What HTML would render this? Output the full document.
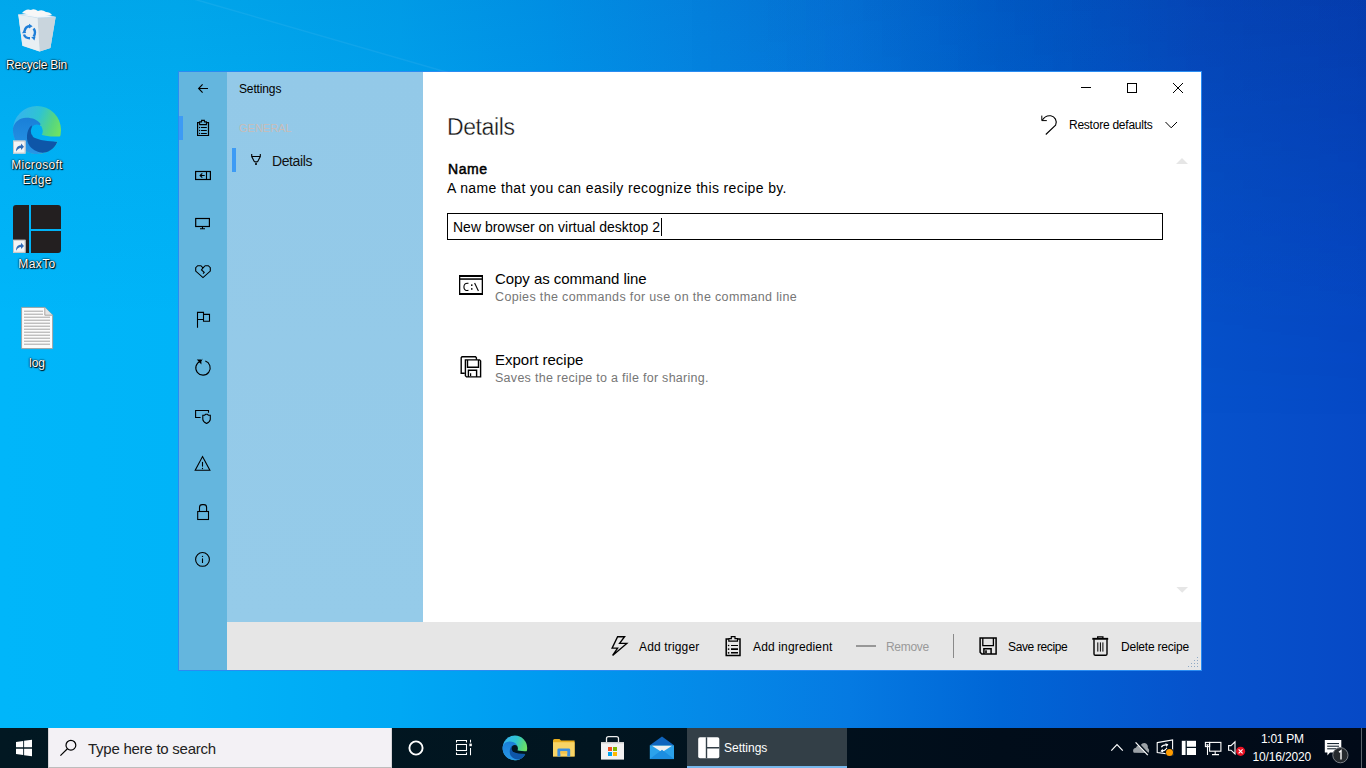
<!DOCTYPE html>
<html><head><meta charset="utf-8">
<style>
*{margin:0;padding:0;box-sizing:border-box}
html,body{width:1366px;height:768px;overflow:hidden}
body{position:relative;font-family:"Liberation Sans",sans-serif;background:#0a70dc}
.abs{position:absolute}
#wp{left:0;top:0;width:1366px;height:728px;
background:
 linear-gradient(90deg,#00b6fa 0px,#00b4f8 180px,#00a8f4 400px,#009af0 550px,#048ae8 700px,#057ae2 850px,#0066d6 1000px,#0652cc 1200px,#0649c6 1366px);
}
#wp2{left:0;top:0;width:1366px;height:728px;
background:linear-gradient(180deg,rgba(0,20,90,.09) 0px,rgba(0,20,90,.04) 150px,rgba(0,20,90,0) 320px);}
#wp3{left:683px;top:0;width:683px;height:728px;
background:linear-gradient(90deg,rgba(0,10,80,0) 0px,rgba(0,10,80,.14) 683px);
-webkit-mask-image:linear-gradient(180deg,#000 0px,rgba(0,0,0,0) 420px);}
#win{left:178px;top:71px;width:1024px;height:600px;border:1px solid #2a8cf2}
#icol{left:179px;top:72px;width:48px;height:598px;background:#64b6de}
#nav{left:227px;top:72px;width:196px;height:550px;background:linear-gradient(180deg,#93c9e8 0%,#95cbe9 100%)}
#content{left:423px;top:72px;width:778px;height:550px;background:#fff}
#cmdbar{left:227px;top:622px;width:974px;height:48px;background:#e6e6e6}
#taskbar{left:0;top:728px;width:1366px;height:40px;background:linear-gradient(90deg,#021822 0px,#011520 600px,#010d1a 1000px,#010a18 1366px)}
#search{left:48px;top:728px;width:344px;height:40px;background:#f3f1f5;border-left:1px solid #d6d3d8;border-right:1px solid #d6d3d8;border-bottom:1px solid #bdbdbd}
#tbset{left:687px;top:728px;width:160px;height:40px;background:#333f47;border-bottom:2px solid #77b8ec}
.t{position:absolute;white-space:nowrap;line-height:1}
.dl{position:absolute;width:76px;text-align:center;color:#fff;font-size:12px;line-height:15px;text-shadow:0 0 2px rgba(0,0,0,.95),1px 1px 1px #000,0 0 1px #000}
</style></head>
<body>
<div id="wp" class="abs"></div>
<div id="wp2" class="abs"></div>
<div id="wp3" class="abs"></div>

<!-- desktop labels -->
<div class="dl" style="left:-1.5px;top:58px;letter-spacing:-0.22px">Recycle Bin</div>
<div class="dl" style="left:-1px;top:158px;letter-spacing:0.3px;line-height:14.5px">Microsoft<br>Edge</div>
<div class="dl" style="left:-1px;top:257px;letter-spacing:0.4px">MaxTo</div>
<div class="dl" style="left:-1px;top:356px">log</div>

<div id="win" class="abs"></div>
<div id="icol" class="abs"></div>
<div id="nav" class="abs"></div>
<div id="content" class="abs"></div>
<div id="cmdbar" class="abs"></div>
<div id="taskbar" class="abs"></div>
<div id="search" class="abs"></div>
<div id="tbset" class="abs"></div>

<!-- nav -->
<div class="t" style="left:239px;top:83px;font-size:12px;letter-spacing:-0.14px;color:#000">Settings</div>
<div class="t" style="left:239px;top:123px;font-size:11px;color:#c8bdb8">GENERAL</div>
<div class="abs" style="left:179px;top:116px;width:4px;height:24px;background:#3d9bf5"></div>
<div class="abs" style="left:232px;top:148px;width:4px;height:24px;background:#3d9bf5"></div>
<div class="t" style="left:272px;top:154px;font-size:14px;letter-spacing:-0.4px;color:#111">Details</div>

<!-- content -->
<div class="t" style="left:447px;top:116px;font-size:23px;letter-spacing:-0.4px;color:#111;-webkit-text-stroke:0.35px #fff">Details</div>
<div class="t" style="left:448px;top:162px;font-size:14px;letter-spacing:0.55px;color:#000;-webkit-text-stroke:0.5px #000">Name</div>
<div class="t" style="left:447px;top:181px;font-size:14px;letter-spacing:0.36px;color:#000">A name that you can easily recognize this recipe by.</div>
<div class="abs" style="left:447px;top:213px;width:716px;height:27px;border:1px solid #000"></div>
<div class="t" style="left:453px;top:220px;font-size:14px;color:#000">New browser on virtual desktop 2</div>
<div class="abs" style="left:661px;top:218px;width:1px;height:18px;background:#000"></div>

<div class="t" style="left:495px;top:271px;font-size:15px;letter-spacing:-0.05px;color:#000">Copy as command line</div>
<div class="t" style="left:495px;top:291px;font-size:12.5px;letter-spacing:0.35px;color:#767676">Copies the commands for use on the command line</div>
<div class="t" style="left:495px;top:352px;font-size:15px;color:#000">Export recipe</div>
<div class="t" style="left:495px;top:372px;font-size:12.5px;letter-spacing:0.28px;color:#767676">Saves the recipe to a file for sharing.</div>

<div class="t" style="left:1069px;top:119px;font-size:12px;letter-spacing:-0.24px;color:#000">Restore defaults</div>

<!-- command bar -->
<div class="t" style="left:639px;top:641px;font-size:12px;letter-spacing:0.15px;color:#000">Add trigger</div>
<div class="t" style="left:753px;top:641px;font-size:12px;letter-spacing:0.15px;color:#000">Add ingredient</div>
<div class="t" style="left:886px;top:641px;font-size:12px;letter-spacing:-0.3px;color:#999">Remove</div>
<div class="t" style="left:1008px;top:641px;font-size:12px;letter-spacing:-0.36px;color:#000">Save recipe</div>
<div class="t" style="left:1121px;top:641px;font-size:12px;letter-spacing:-0.22px;color:#000">Delete recipe</div>

<!-- taskbar -->
<div class="t" style="left:88px;top:741px;font-size:15px;letter-spacing:-0.25px;color:#222">Type here to search</div>
<div class="t" style="left:724px;top:741.5px;font-size:12px;color:#fff">Settings</div>
<div class="t" style="left:1261px;top:733px;font-size:12px;letter-spacing:-0.3px;color:#fff">1:01 PM</div>
<div class="t" style="left:1252.5px;top:751px;font-size:12px;letter-spacing:-0.15px;color:#fff">10/16/2020</div>

<svg class="abs" style="left:0;top:0" width="1366" height="768" viewBox="0 0 1366 768">
<defs>
 <linearGradient id="edgeA" x1="0" y1="0.25" x2="1" y2="0.65">
  <stop offset="0" stop-color="#36b2f0"/><stop offset="0.45" stop-color="#2fc4d2"/><stop offset="0.75" stop-color="#56d680"/><stop offset="1" stop-color="#78e658"/>
 </linearGradient>
 <linearGradient id="edgeB" x1="0" y1="0" x2="0" y2="1">
  <stop offset="0" stop-color="#1a7fd8"/><stop offset="1" stop-color="#2896e6"/>
 </linearGradient>
</defs>
<!-- ===== window icon column ===== -->
<g fill="none" stroke="#000" stroke-width="1.1" stroke-linejoin="miter">
 <path d="M198.6 88.5H208M202.6 84.3L198.6 88.5L202.6 92.7"/>
 <path d="M199.6 122.6H197.6V135.5H208.5V122.6H206.4" stroke-width="1.2"/>
 <path d="M199.6 121.9V124.6H206.4V121.9H204.4V120.4H201.6V121.9Z"/>
 <path d="M201 127.5H206.8M201 130.5H206.8M201 133.5H206.8"/>
 <rect x="195.6" y="171.5" width="14.8" height="8" stroke-width="1.2"/>
 <path d="M206.5 171.5V179.5"/>
 <path d="M200.1 175.5H204.7M202.3 173.3L200.1 175.5L202.3 177.7"/>
 <rect x="195.7" y="218.5" width="13.7" height="8" stroke-width="1.2"/>
 <path d="M202.5 226.5V228.6M200 228.7H205"/>
 <path d="M203 267.9L200.9 265.7H197.7L195.7 267.7V271.1L203 277.6L210.3 271.1V267.7L208.3 265.7H205.2L203 267.9"/>
 <path d="M203 267.9L201.5 269.9L204.2 272.3L203.1 273.6"/>
 <path d="M197.5 327.8V312.4H203.5V319.5H197.5M203.5 314.4H209.5V321.3H203.5V319.5"/>
 <path d="M200.4 361.2A7.2 7.2 0 1 0 205.3 361.1"/>
 <path d="M200.6 361.2L202.3 359.5" stroke-width="1"/>
 <path d="M200.6 417.5H195.6V410.5H208.5V412.7"/>
 <path d="M202.8 415.2H204.6L205.6 414.3H207.4L208.4 415.2H210.3V419.2Q210.3 421.6 206.6 423.5Q202.8 421.6 202.8 419.2Z"/>
 <path d="M202.5 456.6L209.9 470.3H195.2Z"/>
 <path d="M202.5 461.9V466.6"/>
 <rect x="197.7" y="511.5" width="10.8" height="8"/>
 <path d="M199.5 511.5V507.4Q199.5 504.6 202.2 504.6H203.9Q206.6 504.6 206.6 507.4V511.5"/>
 <circle cx="202.5" cy="559.4" r="6.9"/>
 <path d="M202.5 558.4V563"/>
</g>
<g fill="#000">
 <circle cx="199.6" cy="127.5" r="0.65"/><circle cx="199.6" cy="130.5" r="0.65"/><circle cx="199.6" cy="133.5" r="0.65"/>
 <path d="M196.8 359.6H201.4V364.4Z"/>
 <circle cx="202.5" cy="468.5" r="0.65"/>
 <circle cx="202.5" cy="556.4" r="0.7"/>
</g>
<!-- nav funnel -->
<g fill="none" stroke="#000" stroke-width="1.1">
 <path d="M251.7 154V156.6L254.4 161.7H257.6L260.3 156.6V154M251.7 156.5H260.3"/>
</g>
<rect x="255.2" y="162.6" width="1.6" height="2.4" fill="#000"/>
<!-- title bar -->
<g fill="none" stroke="#000" stroke-width="1">
 <path d="M1081 87.5H1091"/>
 <rect x="1127.5" y="83.5" width="9" height="9"/>
 <path d="M1173 83L1183 93M1183 83L1173 93"/>
 <path d="M1041.8 115.6V120.6H1046.8"/>
 <path d="M1042.2 120.2C1044.2 117 1047.5 115.3 1050.8 115.8C1054.8 116.5 1057.6 120.8 1055.6 125.2L1045.8 134.5" stroke-width="1.1"/>
 <path d="M1165.5 122L1171.2 127.8L1177 122"/>
</g>
<path d="M1182 158L1188 164H1176Z M1176.5 587H1188L1182.2 592.8Z" fill="#e6e6e6"/>
<!-- copy icon -->
<g fill="#000">
 <rect x="459" y="275" width="24" height="2"/>
 <rect x="459" y="278.3" width="24" height="1.5"/>
 <rect x="459" y="275" width="1.3" height="20"/>
 <rect x="481.7" y="275" width="1.3" height="20"/>
 <rect x="459" y="293" width="24" height="2"/>
 <rect x="471" y="284.4" width="1.5" height="1.5"/>
 <rect x="471" y="288.2" width="1.5" height="1.5"/>
</g>
<g fill="none" stroke="#000" stroke-width="1.1">
 <path d="M468.4 283.4C465.7 282.7 463.9 284.4 463.9 286.9C463.9 289.3 465.6 291.1 468.4 290.4"/>
 <path d="M474.6 283.1L478.4 290.9"/>
</g>
<!-- export icon -->
<g fill="none" stroke="#000" stroke-width="1.4">
 <path d="M464.8 373.3H461.2V357.7L462 356.8H475.5L476.4 357.7V359.8"/>
 <path d="M465.4 359.9H479.6L480.6 361V376.9H466.5L465.4 375.8Z" fill="#fff"/>
 <path d="M467.5 360V367.3H478.5V360"/>
 <path d="M468.4 376.9V370.3H476.6V376.9"/>
 <path d="M470.6 373.2V376" stroke-width="1.2"/>
</g>
<!-- command bar -->
<g fill="none" stroke="#000" stroke-width="1.35" stroke-linejoin="miter">
 <path d="M617.6 636.7H624.6L619.6 643.4H626.8L612.6 655.4L617.6 648.1H612.1Z"/>
 <path d="M728.6 639.1H726.2V655.4H740V639.1H737.7" stroke-width="1.5"/>
 <path d="M728.8 638.6V641.2H737.5V638.6H735V636.7H731.3V638.6Z" stroke-width="1.2"/>
 <path d="M731 645.5H738" stroke-width="1"/>
 <path d="M731 649.1H738M731 652.8H738" stroke-width="1.6"/>
 <path d="M980.1 637.9H996.1V654H981.8L980.1 652.3Z" stroke-width="1.5"/>
 <path d="M982.8 638V645.6H993.4V638" stroke-width="1.3"/>
 <path d="M983.9 654V648.7H991.1V654" stroke-width="1.5"/>
 <path d="M1092.3 638.8H1108.2" stroke-width="1.9"/>
 <path d="M1097.7 638.2V636.8H1102.9V638.2" stroke-width="1.3"/>
 <path d="M1094 639.2V654Q1094 655.3 1095.4 655.3H1105.6Q1107 655.3 1107 654V639.2" stroke-width="1.4"/>
 <path d="M1097.8 642.4V651.6M1100.4 642.4V651.6M1102.9 642.4V651.6" stroke-width="1"/>
</g>
<g fill="#000">
 <circle cx="728.6" cy="645.5" r="0.8"/><circle cx="728.6" cy="649.1" r="0.9"/><circle cx="728.6" cy="652.8" r="0.9"/>
 <rect x="985.2" y="650.3" width="1.6" height="2.8"/>
</g>
<rect x="856" y="645" width="20" height="2" fill="#979797"/>
<rect x="953" y="634" width="1" height="24" fill="#8a8a8a"/>
<g fill="#8fa9c4">
 <rect x="1197" y="657" width="1" height="1"/>
 <rect x="1194" y="660" width="1" height="1"/><rect x="1197" y="660" width="1" height="1"/>
 <rect x="1191" y="663" width="1" height="1"/><rect x="1194" y="663" width="1" height="1"/><rect x="1197" y="663" width="1" height="1"/>
 <rect x="1188" y="666" width="1" height="1"/><rect x="1191" y="666" width="1" height="1"/><rect x="1194" y="666" width="1" height="1"/><rect x="1197" y="666" width="1" height="1"/>
</g>

<!-- ===== taskbar ===== -->
<g fill="#fff">
 <path d="M16 741.9L23.2 740.9V747.3H16Z"/>
 <path d="M24.1 740.8L32 739.7V747.3H24.1Z"/>
 <path d="M16 748.7H23.2V755L16 754Z"/>
 <path d="M24.1 748.7H32V756.3L24.1 755.2Z"/>
</g>
<g fill="none" stroke="#000" stroke-width="1.2">
 <circle cx="70.9" cy="745.2" r="4.9"/>
 <path d="M67.4 748.7L60.4 755.6"/>
</g>
<circle cx="416" cy="748" r="6.6" fill="none" stroke="#fff" stroke-width="1.9"/>
<g fill="none" stroke="#fff" stroke-width="1.05">
 <path d="M456.5 742.6V740.5H466.5V742.6"/>
 <rect x="456.5" y="744.5" width="10" height="6"/>
 <path d="M456.5 752.4V754.5H466.5V752.4"/>
 <path d="M470.5 739.8V742.4M470.5 748V755.2"/>
</g>
<rect x="469.4" y="743.6" width="2.4" height="2.6" fill="#fff"/>
<!-- edge taskbar -->
<g transform="translate(502.6 735.6) scale(0.5125)">
 <use href="#edgeIcon"/>
</g>
<!-- explorer -->
<path d="M553 740.5Q553 739 554.5 739H559.5L561 740.5H574.6V756.4H553Z" fill="#e9ae1f"/>
<path d="M553 742.2H574.6V756.4H553Z" fill="#f8d466"/>
<path d="M557.4 756.4V749.8Q557.4 748.4 558.8 748.4H568.8Q570.2 748.4 570.2 749.8V756.4H567.2V751.2H560.4V756.4Z" fill="#3a8de0"/>
<rect x="560.4" y="751.2" width="6.8" height="2.5" fill="#f3c24a"/>
<!-- store -->
<path d="M606.5 742.2V738.6Q606.5 736.6 608.5 736.6H616.5Q618.5 736.6 618.5 738.6V742.2" fill="none" stroke="#ececec" stroke-width="1.3"/>
<path d="M601 742H624V759.6H601Z" fill="#f2f2f2"/>
<rect x="601" y="742" width="23" height="1.4" fill="#cfcfcf"/>
<rect x="608" y="747" width="4" height="4" fill="#f25022"/>
<rect x="613" y="747" width="4" height="4" fill="#7fba00"/>
<rect x="608" y="752" width="4" height="4" fill="#00a4ef"/>
<rect x="613" y="752" width="4" height="4" fill="#ffb900"/>
<!-- mail -->
<path d="M649.8 745.2L662 736.4L674 745.2Z" fill="#0f64bd"/>
<path d="M649.8 745.2H674V759.1H649.8Z" fill="#2ba2eb"/>
<path d="M652 745.8H672L662 752.3Z" fill="#f0f0f0"/>
<path d="M649.8 759.1L662 749.8L674 759.1Z" fill="#1c8ee0"/>
<!-- settings app taskbar icon -->
<rect x="698.2" y="737.2" width="21.1" height="21.1" rx="1.8" fill="#fff"/>
<path d="M706.5 737.2V758.3M706.5 747.8H719.3" stroke="#333f47" stroke-width="1.4"/>
<!-- tray -->
<path d="M1111.3 750.6L1117 744.7L1122.8 750.6" fill="none" stroke="#fff" stroke-width="1.2"/>
<path d="M1133.8 752.8C1132.5 751.2 1133 748.2 1136 747.8C1136.8 745.4 1139 744.6 1140.8 745.2C1141.8 743.2 1144.4 742.4 1146.1 743.6C1147.7 744.6 1148.1 746.6 1147.8 748C1149.4 748.8 1149.7 751.6 1148.3 753Z" fill="#9ba1a6"/>
<path d="M1136.8 742.2L1148.8 755" stroke="#010d1a" stroke-width="2.4"/><path d="M1135.6 742.4L1147.8 755.2" stroke="#fff" stroke-width="1.2"/>
<path d="M1157.2 742.6L1172.6 740V754.6L1157.2 752.6Z" fill="none" stroke="#fff" stroke-width="1.1"/>
<path d="M1161.4 747.2Q1162.4 744.6 1166.6 744.8M1166.8 747.8Q1165.8 750.8 1161.8 750.8" fill="none" stroke="#fff" stroke-width="1.2"/><path d="M1165.2 743.2L1168.4 744.2L1166.6 747Z M1163.2 752.6L1160.4 751.2L1162.6 748.8Z" fill="#fff"/>
<circle cx="1169.5" cy="752.4" r="4.1" fill="#010d1a"/><circle cx="1169.5" cy="752.4" r="3.5" fill="#ff9c00"/>
<rect x="1181.8" y="740.8" width="14.2" height="14.2" fill="#fff"/>
<path d="M1186.2 740.8V755M1186.2 747.4H1196" stroke="#03131f" stroke-width="1.3"/>
<g fill="none" stroke="#fff" stroke-width="1.1">
 <rect x="1209.6" y="742.4" width="11.3" height="8.8"/>
 <rect x="1205.4" y="742.4" width="4.2" height="4.2"/>
 <path d="M1207.5 746.6V755M1215.2 751.2V754.6M1212 754.6H1219M1206.5 744.5L1207.5 745.5L1208.5 744.5"/>
 <path d="M1228.6 745.6H1231L1235 741.8V754L1231 750.2H1228.6Z"/>
</g>
<circle cx="1240.6" cy="751.3" r="4.6" fill="#e81123"/>
<path d="M1238.6 749.3L1242.6 753.3M1242.6 749.3L1238.6 753.3" stroke="#fff" stroke-width="1.1"/>
<path d="M1324.8 740H1341.3V752.6H1330L1327.4 755.4V752.6H1324.8Z" fill="#fff"/>
<path d="M1327.2 743.6H1339M1327.2 746.2H1339M1327.2 748.8H1336" stroke="#03131f" stroke-width="1"/>
<circle cx="1340.4" cy="755.2" r="7.6" fill="#262a2e" stroke="#7b8086" stroke-width="1"/>
<path d="M1339 752.2L1341 750.6V759.6" fill="none" stroke="#fff" stroke-width="1.4"/>
<rect x="1361" y="728" width="1" height="40" fill="#5a636b"/>

<line x1="190" y1="-2" x2="460" y2="76" stroke="#fff" stroke-opacity="0.06" stroke-width="1.5"/>
<!-- ===== desktop icons ===== -->
<defs>
 <mask id="edgeMask" maskUnits="userSpaceOnUse" x="-2" y="-2" width="52" height="52">
  <rect x="-2" y="-2" width="52" height="52" fill="#fff"/>
  <ellipse cx="23.8" cy="25" rx="6" ry="6.6" fill="#000"/>
  <path d="M24 27.2C30 30 40 31.2 48.5 30.3V37L44.4 35.7C36 35.6 26 34.5 19.5 30.8Z" fill="#000"/>
  <path d="M44.4 35.7L48.5 36V48.5H30.5C38 46.5 42.5 41.5 44.4 35.7Z" fill="#000"/>
 </mask>
 <g id="edgeIcon">
  <g mask="url(#edgeMask)">
   <circle cx="24" cy="24" r="24" fill="url(#edgeA)"/>
   <path d="M0 22C2 15 7 12 13 11.7C19 11.5 24.5 13.5 27.6 17.9L24 25C28 30.5 36 34.8 44.4 35.7C40 44 32 48 24 48C10.7 48 0 37.3 0 24Z" fill="url(#edgeB)"/>
   <path d="M18.3 19.6C13.2 24.5 12.4 34.5 16.8 40.3C20.8 45 26.8 47 31 46.6C37 45.8 42.2 41.2 44.4 35.7C36 34.8 28 30.5 24 25Z" fill="#0e56a8"/>
  </g>
 </g>
 <g id="shortcut">
  <rect x="0" y="0" width="12.5" height="13" fill="#f4f4f4"/>
  <rect x="0.5" y="0.5" width="11.5" height="12" fill="none" stroke="#c8c8c8" stroke-width="1"/>
  <path d="M3 11C3 7 5 5 8 5V3L11 6.2L8 9.3V7.3C6 7.3 4.5 8.5 3 11Z" fill="#2f6cb8"/>
 </g>
</defs>
<!-- recycle bin -->
<path d="M18.3 14.8L37.5 12.5L55.6 17.2L50.4 48L39.6 51.6L22.4 45.8Z" fill="#dfe8ee"/>
<path d="M37.5 18L55.6 17.2L50.4 48L39.6 51.6Z" fill="#c9d5dd"/>
<path d="M18.3 14.8L37.5 18L55.6 17.2L37.5 12.5Z" fill="#f0f6fa" stroke="#b8d4e8" stroke-width="0.8"/>
<path d="M22 13Q26 8 31 10Q34 8 38 11Q42 9 46 12Q50 12 52 15L37.5 16.5Z" fill="#f7f7f7"/>
<path d="M18.3 14.8L22.4 45.8L39.6 51.6L37.5 18Z" fill="#e9eff3" opacity="0.9"/>
<g fill="none" stroke="#1f7fd8" stroke-width="2.4" stroke-linecap="butt">
 <path d="M24.6 31.5Q25 26.5 29.8 26"/>
 <path d="M33.6 28.5Q36.5 32.5 33.6 36.5"/>
 <path d="M30 38.2Q25.2 38.2 24 34.5"/>
</g>
<g fill="#1f7fd8">
 <path d="M29 23.8L32.6 26.2L29 28.6Z"/>
 <path d="M31.2 37L35.6 36.4L34.4 40.4Z"/>
 <path d="M22 33.2L26.2 33L24.4 29.4Z"/>
</g>
<!-- edge desktop -->
<g transform="translate(13 106)"><use href="#edgeIcon"/></g>
<g transform="translate(13 140.6)"><use href="#shortcut"/></g>
<!-- maxto -->
<path d="M16 205H29V253H16Q13 253 13 250V208Q13 205 16 205Z" fill="#231f20"/>
<path d="M31 205H58Q61 205 61 208V229H31Z" fill="#231f20"/>
<path d="M31 231H61V250Q61 253 58 253H31Z" fill="#231f20"/>
<g transform="translate(13 239.8)"><use href="#shortcut"/></g>
<!-- log -->
<path d="M21.6 307.4H44.8L52.6 315.2V348.6H21.6Z" fill="#fbfbfb" stroke="#a39e9a" stroke-width="0.9"/>
<path d="M44.8 307.4V315.2H52.6" fill="#e4e4e4" stroke="#a39e9a" stroke-width="0.9"/>
<g stroke="#9a9a9a" stroke-width="0.9">
 <path d="M24 311.2H43M24 314.2H43M24 317.2H50M24 320.2H50M24 323.2H50M24 326.2H50M24 329.2H50M24 332.2H50M24 335.2H50M24 338.2H50M24 341.2H50M24 344.2H50"/>
</g>

</svg>
</body></html>
